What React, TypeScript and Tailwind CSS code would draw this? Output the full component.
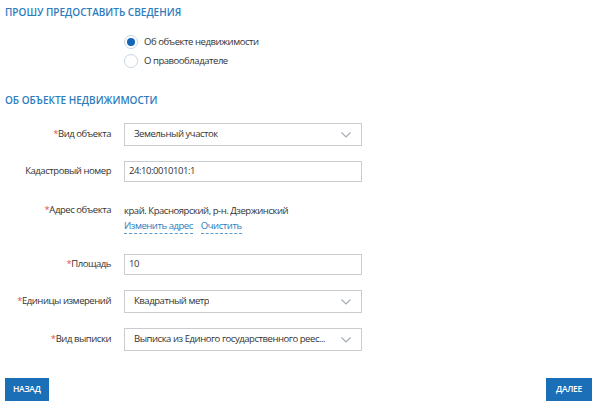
import React from "react";

const Chevron = () => (
  <svg width="12" height="8" viewBox="0 0 12 8" className="shrink-0">
    <path d="M1.5 1.5 L6 6 L10.5 1.5" fill="none" stroke="#a3abb3" strokeWidth="1.1" />
  </svg>
);

const Label = ({ children, req }: { children: React.ReactNode; req?: boolean }) => (
  <div className="w-[111px] shrink-0 text-right text-[9.5px] tracking-[-0.45px] text-[#333] whitespace-nowrap">
    {req && <span className="text-[#d9534f]">*</span>}
    {children}
  </div>
);

const Select = ({ value }: { value: string }) => (
  <div className="w-[238px] h-[23px] border border-[#c8cdd2] bg-white flex items-center justify-between pl-[9px] pr-[9px] text-[9.5px] tracking-[-0.45px] text-[#333]">
    <span className="whitespace-nowrap overflow-hidden">{value}</span>
    <Chevron />
  </div>
);

const Input = ({ value }: { value: string }) => (
  <div className="w-[238px] h-[21px] border border-[#c8cdd2] bg-white flex items-center pl-[4px] text-[9.5px] tracking-[-0.45px] text-[#333]">
    {value}
  </div>
);

export default function App() {
  return (
    <div className="w-[598px] h-[414px] bg-white relative overflow-hidden" style={{ fontFamily: '"Open Sans", "Noto Sans", sans-serif' }}>
      <div className="pl-[5px] pt-[4px] text-[10px] font-semibold text-[#2d7cbc] tracking-[0px] leading-[16px]">
        ПРОШУ ПРЕДОСТАВИТЬ СВЕДЕНИЯ
      </div>
      <div className="pl-[124px] mt-[15px] flex flex-col gap-[5px]">
        <div className="flex items-center gap-[6px] h-[14px]">
          <div className="w-[14px] h-[14px] rounded-full border border-[#c9d6e3] flex items-center justify-center">
            <div className="w-[8px] h-[8px] rounded-full bg-[#1565b8]" />
          </div>
          <span className="text-[9.5px] tracking-[-0.45px] text-[#333]">Об объекте недвижимости</span>
        </div>
        <div className="flex items-center gap-[6px] h-[14px]">
          <div className="w-[14px] h-[14px] rounded-full border border-[#c9d6e3]" />
          <span className="text-[9.5px] tracking-[-0.45px] text-[#333]">О правообладателе</span>
        </div>
      </div>
      <div className="pl-[5px] mt-[24px] text-[10px] font-semibold text-[#2d7cbc] tracking-[0px] leading-[16px]">
        ОБ ОБЪЕКТЕ НЕДВИЖИМОСТИ
      </div>
      <div className="mt-[15px] flex flex-col">
        <div className="flex items-center gap-[13px]">
          <Label req>Вид объекта</Label>
          <Select value="Земельный участок" />
        </div>
        <div className="flex items-center gap-[13px] mt-[15px]">
          <Label>Кадастровый номер</Label>
          <Input value="24:10:0010101:1" />
        </div>
        <div className="flex items-start gap-[13px] mt-[21px]">
          <Label req>Адрес объекта</Label>
          <div className="text-[9.5px] tracking-[-0.45px] text-[#333]">
            <div className="leading-[15px]">край. Красноярский, р-н. Дзержинский</div>
            <div className="flex gap-[8px] mt-[1px] leading-[14px] text-[#2d7cbc]">
              <span className="border-b border-dashed border-[#5b9bd0]">Изменить адрес</span>
              <span className="border-b border-dashed border-[#5b9bd0]">Очистить</span>
            </div>
          </div>
        </div>
        <div className="flex items-center gap-[13px] mt-[20px]">
          <Label req>Площадь</Label>
          <Input value="10" />
        </div>
        <div className="flex items-center gap-[13px] mt-[15px]">
          <Label req>Единицы измерений</Label>
          <Select value="Квадратный метр" />
        </div>
        <div className="flex items-center gap-[13px] mt-[15px]">
          <Label req>Вид выписки</Label>
          <Select value="Выписка из Единого государственного реес..." />
        </div>
      </div>
      <div className="flex justify-between px-[5px] mt-[27px]">
        <div className="h-[23px] px-[8px] bg-[#1a6fb7] text-white text-[8.5px] font-semibold tracking-[-0.3px] flex items-center">НАЗАД</div>
        <div className="h-[23px] px-[10px] mr-[1px] bg-[#1a6fb7] text-white text-[8.5px] font-semibold tracking-[-0.3px] flex items-center">ДАЛЕЕ</div>
      </div>
    </div>
  );
}
